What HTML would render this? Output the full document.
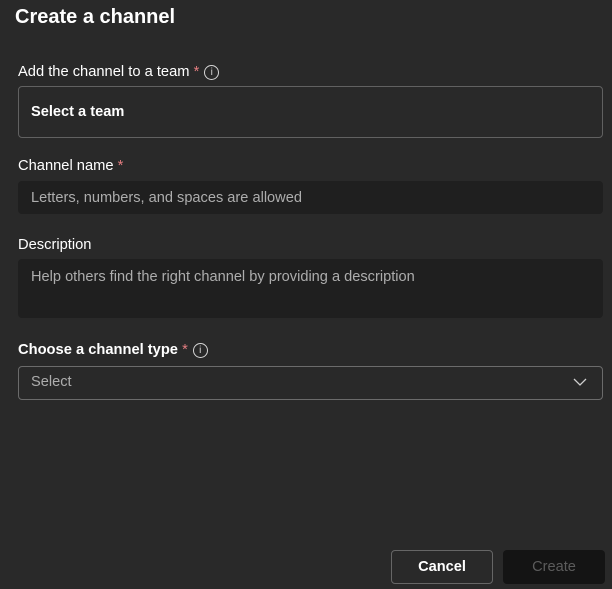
<!DOCTYPE html>
<html><head><style>
body{margin:0;width:612px;height:589px;background:#292929;font-family:"Liberation Sans",sans-serif;color:#fff;position:relative;overflow:hidden}
.a{position:absolute}
.lbl{font-size:14.7px;color:#fff;display:flex;align-items:center;white-space:pre}
.req{color:#e37d80}
.info{display:inline-block;box-sizing:border-box;width:15px;height:15px;border:1.2px solid #d6d6d6;border-radius:50%;font-size:10px;line-height:13px;text-align:center;margin-left:5px;color:#d6d6d6;font-weight:normal}
.ph{color:#adadad;font-size:14.6px}
</style></head><body>
<div class="a" style="left:15px;top:6px;font-size:20px;font-weight:bold">Create a channel</div>
<div class="a lbl" style="left:18px;top:64px">Add the channel to a team <span class="req">*</span><span class="info">i</span></div>
<div class="a" style="left:18px;top:86px;width:583px;height:50px;border:1px solid #616161;border-radius:4px"></div>
<div class="a" style="left:31px;top:104px;font-size:14.6px;font-weight:bold">Select a team</div>
<div class="a lbl" style="left:18px;top:158px">Channel name <span class="req">*</span></div>
<div class="a" style="left:18px;top:181px;width:585px;height:33px;background:#1f1f1f;border-radius:4px"></div>
<div class="a ph" style="left:31px;top:190px">Letters, numbers, and spaces are allowed</div>
<div class="a lbl" style="left:18px;top:237px">Description</div>
<div class="a" style="left:18px;top:259px;width:585px;height:59px;background:#1f1f1f;border-radius:4px"></div>
<div class="a ph" style="left:31px;top:269px">Help others find the right channel by providing a description</div>
<div class="a lbl" style="left:18px;top:342px;font-weight:bold">Choose a channel type <span class="req" style="font-weight:normal">*</span> <span class="info">i</span></div>
<div class="a" style="left:18px;top:366px;width:583px;height:32px;border:1px solid #6b6b6b;border-radius:4px"></div>
<div class="a ph" style="left:31px;top:374px">Select</div>
<svg class="a" style="left:573px;top:377px" width="14" height="10"><path d="M1 2 L7 8 L13 2" stroke="#cfcfcf" stroke-width="1.3" fill="none"/></svg>
<div class="a" style="left:391px;top:550px;width:100px;height:32px;border:1px solid #666;border-radius:4px;text-align:center;line-height:32px;font-size:14.6px;font-weight:bold">Cancel</div>
<div class="a" style="left:503px;top:550px;width:102px;height:34px;background:#141414;border-radius:4px;text-align:center;line-height:34px;font-size:14.6px;color:#5c5c5c">Create</div>
</body></html>
